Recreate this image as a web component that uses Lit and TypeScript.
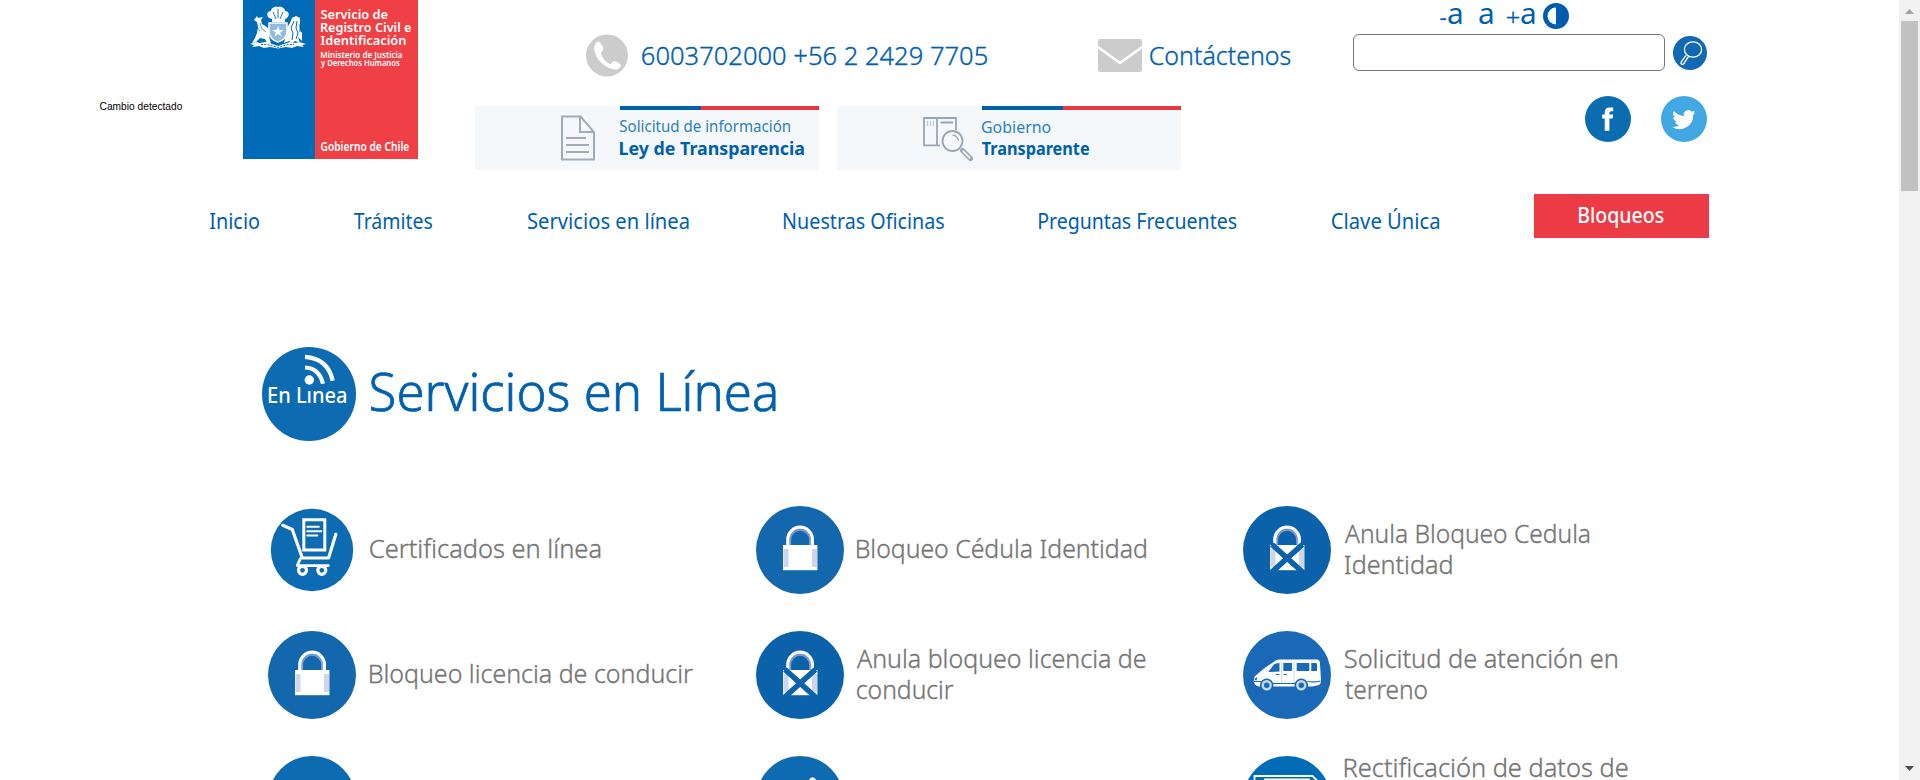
import { LitElement, html, svg, css, nothing } from "lit";
import { customElement, property } from "lit/decorators.js";

const FONT = '"Noto Sans", "Open Sans", sans-serif';
const pen = document.createElement("canvas").getContext("2d")!;

/* One line of text whose ink spans exactly `width` pixels, centred on its capital height. */
@customElement("fit-text")
class FitText extends LitElement {
  @property() text = "";
  @property() family = FONT;
  @property({ type: Number }) width = 100;
  @property({ type: Number }) size = 16;
  @property({ type: Number }) line = 20;
  @property({ type: Number }) weight = 400;

  static styles = css`
    :host { display: block; flex: none; }
    svg { display: block; overflow: visible; }
    text { fill: currentColor; stroke: currentColor; }
  `;

  render() {
    /* Measured at ten times the size, since the ink box is rounded to whole pixels. */
    pen.font = `${this.weight} ${this.size * 10}px ${this.family}`;
    const m = pen.measureText(this.text);
    const left = m.actualBoundingBoxLeft / 10;
    const ink = left + m.actualBoundingBoxRight / 10;
    const scale = this.width / ink;
    const base = this.line / 2 + this.size * 0.357;
    /* The light cut is thickened a little, to a weight between light and regular. */
    const stroke = this.weight === 300 ? this.size * 0.014 : 0;
    return html`<svg width=${this.width} height=${this.line}>
      <text
        transform="translate(${left * scale} ${base}) scale(${scale} 1)" stroke-width=${stroke}
        font-family=${this.family} font-size=${this.size} font-weight=${this.weight}
      >${this.text}</text>
    </svg>`;
  }
}

const fit = (text: string, width: number, size: number, line: number, weight = 400, family = FONT) =>
  html`<fit-text .text=${text} .width=${width} .size=${size} .line=${line} .weight=${weight} .family=${family}></fit-text>`;

const lockBody = svg`
  <path d="M34.200 39V34a9.900 10.200 0 0 1 19.800 0V39" fill="none" stroke="#7f9bd0" stroke-width="1.800"/>
  <path d="M31.800 40V33.500a12.300 12.300 0 0 1 24.600 0V40" fill="none" stroke="#fff" stroke-width="3.200"/>
  <rect x="27" y="39" width="34.400" height="25.200" fill="#fff"/>
  <path d="M27.500 43h5v18h-5zM56 43h5v18h-5z" fill="#ced6ee"/>`;

const art: Record<string, [string, unknown]> = {
  lock: ["#1367ad", lockBody],
  unlock: ["#0b62ab", svg`${lockBody}
    <path d="M29 38.500L60 66.500M59.400 38.500L28.400 66.500" stroke="#0b62ab" stroke-width="5.600"/>`],
  cart: ["#0d6bb1", svg`<g transform="translate(2.8 2.3)" fill="none" stroke="#fff" stroke-width="3.2" stroke-linecap="round" stroke-linejoin="round">
    <path d="M12 17l9.500 4.200 10 28.500h26.300L65 26"/>
    <path d="M29.500 50.500L26.500 57M26.500 57.300h31" stroke-width="2.800"/>
    <circle cx="31.700" cy="62" r="4"/><circle cx="51" cy="62" r="4"/>
    <path d="M33 11.500h21v30.300H33z" stroke-linejoin="miter" stroke-width="3"/>
    <path d="M36.500 18.400h11.500M36.500 22.900h14M36.500 27.200h10" stroke-width="2"/></g>`],
  van: ["#1a69b6", svg`
    <path d="M10.700 49.500l1-4q2-2 10-8.500l11-7.500q2-1 4-1h37q3 .3 3.200 3l1.200 18.500q-.3 4-4 4.500l-5 1H16q-5-1-5.300-6z" fill="#fff"/>
    <path d="M25.300 41l5.500-7.500q1.500-1.500 5.700-1.500v8.500zM40.300 32H49v8h-8.700zM53.700 32h12.600v8H53.700zM68.300 32h4.500q1.200 0 1.200 1.500V40h-5.700z" fill="#1a69b6"/>
    <path d="M38.700 31v22M51 31v22" stroke="#c5d9ee" stroke-width="1"/>
    <path d="M33 43.500h3.500M40.500 43.500H44" stroke="#1a69b6" stroke-width="1.200"/>
    <path d="M11 50.500h7M29.500 52.500h23M64.500 50.500q8 1 13-.5" stroke="#1a69b6" stroke-width="1.100" fill="none"/>
    <path d="M11.500 49l1.300-2.500 1.500 0-.8 3z" fill="#1a69b6"/>
    <g fill="#c3d8ee" stroke="#1a69b6"><circle cx="23.700" cy="54.300" r="6" stroke-width="1.600"/><circle cx="58.300" cy="54.300" r="6" stroke-width="1.600"/></g>
    <g fill="#1a69b6"><circle cx="23.700" cy="54.300" r="2.700"/><circle cx="58.300" cy="54.300" r="2.700"/></g>`],
  plain: ["#0d6bb1", svg`<path d="M25 24.200h40" stroke="#2a6fb9" stroke-width=".6"/>`],
  pencil: ["#0d6bb1", svg`<path d="M53 25q.5-3.500 3.500-3.800 3 .3 4 3.800z" fill="#fff"/>`],
  card: ["#006cb5", svg`<path d="M11.500 30V20h58l6 6M22 23.500h44V30H22z" fill="none" stroke="#fff" stroke-width="1.800"/>`],
};

interface Service { icon: string; r?: number; rows?: number; lines: [string, number][]; }
const services: Service[] = [
  { icon: "cart", r: 41.2, lines: [["Certificados en línea", 230.5]] },
  { icon: "lock", lines: [["Bloqueo Cédula Identidad", 289]] },
  { icon: "unlock", lines: [["Anula Bloqueo Cedula", 244.5], ["Identidad", 106.5]] },
  { icon: "lock", lines: [["Bloqueo licencia de conducir", 323]] },
  { icon: "unlock", lines: [["Anula bloqueo licencia de", 288.5], ["conducir", 96.5]] },
  { icon: "van", lines: [["Solicitud de atención en", 272], ["terreno", 82]] },
  { icon: "plain", lines: [] },
  { icon: "pencil", lines: [] },
  { icon: "card", rows: 3, lines: [["Rectificación de datos de", 282.5]] },
];

const nav: [string, number][] = [
  ["Inicio", 49], ["Trámites", 78], ["Servicios en línea", 160.5],
  ["Nuestras Oficinas", 160], ["Preguntas Frecuentes", 197.5], ["Clave Única", 107],
];

@customElement("app-root")
class AppRoot extends LitElement {
  static styles = css`
    :host { display: block; font-family: "Noto Sans", sans-serif; color: #0060ae; }
    svg { display: block; flex: none; }
    .window { display: flex; height: 780px; overflow: hidden; background: #fff; }
    .page { width: 1899px; flex: none; }
    .bar { width: 21px; background: #f1f1f1; display: flex; flex-direction: column; }
    .thumb { height: 170px; width: 17px; margin-left: 2px; background: #c1c1c1; }
    .gap { flex: 1; }
    .header { display: flex; align-items: flex-start; height: 194px; }
    .note { width: 143px; padding: 96px 0 0 100px; color: #000; }
    .logo { display: flex; width: 175px; height: 159px; color: #fff; }
    .logo-blue { width: 72px; background: #006cb7; padding: 6px 0 0 6px; box-sizing: border-box; }
    .logo-red { flex: 1; background: #ef4045; display: flex; flex-direction: column; padding: 8px 0 2px 6.3px; }
    .ministry { margin-top: 4px; }
    .middle { width: 706px; margin-left: 57px; }
    .contact { display: flex; align-items: center; height: 106px; padding: 5px 0 0 111px; box-sizing: border-box; }
    .phone-text { margin: 0 111.3px 0 13.7px; }
    .mail-text { margin-left: 8.3px; }
    .banners { display: flex; gap: 18px; }
    .banner { width: 344px; height: 64px; background: #f4f8fa; display: flex; }
    .banner-icon { width: 145px; padding: 8px 0 0 85px; box-sizing: border-box; }
    .banner-main { flex: 1; }
    .stripe { height: 4px; background: linear-gradient(90deg, #005fae 81px, #e7373f 81px); }
    .banner-main fit-text:nth-child(2) { color: #2d7fc0; margin-top: 6px; }
    .right { width: 356px; margin-left: 172px; }
    .sizes { display: flex; align-items: center; height: 32px; padding-left: 87px; }
    .s1 { margin: 2px 1.5px 0 0; }
    .s2 { margin: 0 17.5px 4px 0; }
    .s3 { margin: 0 14.5px 4px 0; }
    .s4 { margin: 2px 2px 0 0; }
    .s5 { margin: 0 8.5px 4px 0; }
    .search { display: flex; align-items: center; gap: 8px; margin-top: 2px; }
    .field { width: 312px; height: 37px; box-sizing: border-box; border: 1px solid #767676; border-radius: 6px; background: #fff; outline: 0; padding: 0 8px; font: inherit; }
    .social { display: flex; justify-content: flex-end; gap: 30px; padding: 24.5px 2px 0 0; }
    .nav { display: flex; align-items: flex-start; gap: 95.3px; padding-left: 210.2px; height: 54px; }
    .block { width: 175px; height: 44px; background: #ec3b45; color: #fff; display: flex; justify-content: center; }
    .title { display: flex; align-items: center; padding: 99px 0 0 262px; gap: 15px; height: 94px; }
    .title fit-text { margin-bottom: 4px; }
    .grid { display: grid; grid-template-columns: repeat(3, 487.5px); grid-auto-rows: 125px; padding: 46.5px 0 0 268px; }
    .cell { display: flex; align-items: center; gap: 13.8px; }
    .label { color: #757575; margin-bottom: 3px; }
    .label.tall { height: 93px; }
  `;

  crest() {
    return html`<svg width="58" height="43" viewBox="0 0 58 43" fill="#fff">
      <path d="M20 12c-3-3-2-7 2-7 0-3 4-5 7-4 3-1 7 1 7 4 4 0 5 4 2 7l-2 1 0 3H23l0-3z"/>
      <path d="M24 6l3 7M29 3v9M34 6l-3 7" stroke="#006cb7" stroke-width=".9"/>
      <path d="M5 14l3-4 1 2 5-1-2 3 1 4 5 3 3 5-1 4 2 8-3 1-3-6-5-1-4 4-4 1 3-5 2-5 1-6-1-5z"/>
      <path d="M11 17l2 6 4 3M7 20l4 5" stroke="#006cb7" stroke-width=".7" fill="none"/>
      <path d="M51 12l-4-2-4 2-2 5-4 6 0 5-2 9 5-2 3 2 3-2 5 2-2-6 4 4 0-8-2-3 0-8z"/>
      <path d="M45 15l-3 7 2 5 -1 7M48 15l-1 7 2 5-2 6M51 18l0 8" stroke="#006cb7" stroke-width="1" fill="none"/>
      <path d="M20 17h18v9q-1 8-9 10-8-2-9-10z" fill="#8ebde0" stroke="#fff" stroke-width="1.5"/>
      <path d="M29 20l1.500 4h4l-3.300 2.500 1.300 4-3.500-2.400-3.500 2.400 1.300-4-3.300-2.500h4z"/>
      <path d="M1 38l6-2 4 1 6-1 12 4 12-4 6 1 3-1 7 2-4 1 2 2-7-1-5 2-6-1-8 1.500-8-1.500-6 1-5-2-7 1 2-2z"/>
      <path d="M12 38.500l6 0 11 3 10-3 6 0" stroke="#006cb7" stroke-width="1" stroke-dasharray="2 1.300" fill="none"/>
    </svg>`;
  }

  banner(icon: unknown, top: unknown, bottom: unknown) {
    return html`<div class="banner">
      <div class="banner-icon">${icon}</div>
      <div class="banner-main"><div class="stripe"></div>${top}${bottom}</div>
    </div>`;
  }

  render() {
    return html`<div class="window">
      <div class="page">
        <div class="header">
          <div class="note">${fit("Cambio detectado", 82, 11, 20, 400, '"Liberation Sans", sans-serif')}</div>
          <div class="logo">
            <div class="logo-blue">${this.crest()}</div>
            <div class="logo-red">
              ${fit("Servicio de", 66.5, 12.6, 13, 600)}
              ${fit("Registro Civil e", 90, 12.6, 13, 600)}
              ${fit("Identificación", 84.5, 12.6, 13, 600)}
              <div class="ministry">
                ${fit("Ministerio de Justicia", 81, 8.4, 8.3, 600)}
                ${fit("y Derechos Humanos", 78.5, 8.4, 8.3, 600)}
              </div>
              <div class="gap"></div>
              ${fit("Gobierno de Chile", 88, 11.8, 20, 600)}
            </div>
          </div>
          <div class="middle">
            <div class="contact">
              <svg width="42" height="43" viewBox="0 0 42 43">
                <circle cx="21" cy="21.500" r="21" fill="#ccc"/>
                <path d="M12.500 7.300q-5 2.700-4.300 8.200 1.300 8 7.300 13.500 6 5.600 13.500 6.500 4.300.3 6-4.300-3-3.700-7.500-4.200l-3.300 3.200q-7.500-3.700-9.300-11l2.300-3.200q.3-4.500-4.700-8.700z" fill="#fff"/>
              </svg>
              <div class="phone-text">${fit("6003702000 +56 2 2429 7705", 345, 26.4, 31, 300)}</div>
              <svg width="44" height="33" viewBox="0 0 44 33">
                <rect width="44" height="33" rx="2" fill="#ccc"/>
                <path d="M-1 7.500L22 24 45 7.500" fill="none" stroke="#fff" stroke-width="2.600"/>
              </svg>
              <div class="mail-text">${fit("Contáctenos", 140.5, 26.4, 31, 300)}</div>
            </div>
            <div class="banners">
              ${this.banner(
                html`<svg width="36" height="48" viewBox="0 0 36 48" fill="none" stroke="#a0adb8" stroke-width="2">
                  <path d="M2 2.500h18.500L34 18v27.500H2zM20 3v15h14M6 24h20M6 31h23M6 38h23"/></svg>`,
                fit("Solicitud de información", 170, 16.2, 20),
                fit("Ley de Transparencia", 184, 18, 25, 700))}
              ${this.banner(
                html`<svg width="52" height="48" viewBox="0 0 52 48" fill="none" stroke="#9aa7b3" stroke-width="1.800">
                  <path d="M18 31.300H2V4h32v12M15 4v27M18.500 8.500H31"/>
                  <path d="M5.500 7v5M8.500 7v5M11.500 7v5" stroke="#c3ccd3" stroke-width="1.300"/>
                  <circle cx="30.500" cy="27" r="10"/><path d="M30.500 21.200q5 .3 6 5.500" stroke-width="1.300"/>
                  <path d="M40.500 36.500l8 8" stroke-width="5" stroke-linecap="round"/><path d="M40.800 36.800l7.500 7.500" stroke="#f4f8fa" stroke-width="1.800"/></svg>`,
                fit("Gobierno", 68.5, 16.4, 22.5),
                fit("Transparente", 107, 17.5, 19.5, 700))}
            </div>
          </div>
          <div class="right">
            <div class="sizes">
              <div class="s1">${fit("-", 6, 22, 30)}</div>
              <div class="s2">${fit("a", 13.5, 29, 28)}</div>
              <div class="s3">${fit("a", 13.5, 29, 28)}</div>
              <div class="s4">${fit("+", 12, 24, 28, 300)}</div>
              <div class="s5">${fit("a", 13.5, 29, 28)}</div>
              <svg width="26" height="26" viewBox="0 0 26 26"><circle cx="13" cy="13" r="13" fill="#005cb0"/><path d="M13 4.500v17a8.500 8.500 0 0 1 0-17z" fill="#fff"/></svg>
            </div>
            <div class="search">
              <input class="field" type="text">
              <svg width="34" height="34" viewBox="0 0 34 34"><circle cx="17" cy="17" r="17" fill="#1168b3"/>
                <g fill="none" stroke="#fff" stroke-width="1.300"><ellipse cx="20" cy="13.500" rx="8.600" ry="7.700"/><path d="M13 19.300l-5 7q-.5 1.500.8 2t2-.6l4.800-7.400"/></g></svg>
            </div>
            <div class="social">
              <svg width="46" height="46" viewBox="0 0 46 46"><circle cx="23" cy="23" r="23" fill="#0b6cb0"/>
                <path d="M19.700 34.700V22.500h-2.500v-4h2.500v-2.300q0-4.800 5-4.800h3.500v3.800h-2.200q-1.600 0-1.600 1.500v1.800h3.700l-.4 4h-3.300v12.200z" fill="#fff"/></svg>
              <svg width="46" height="46" viewBox="0 0 46 46"><circle cx="23" cy="23" r="23" fill="#42a8e3"/>
                <path transform="translate(11.300 12) scale(.97)" fill="#fff" d="M24 4.600a10 10 0 0 1-2.800.8 5 5 0 0 0 2.100-2.700 10 10 0 0 1-3.100 1.200 4.900 4.900 0 0 0-8.400 4.500A14 14 0 0 1 1.700 3.200a4.900 4.900 0 0 0 1.500 6.500 5 5 0 0 1-2.200-.6 4.900 4.900 0 0 0 4 4.900 5 5 0 0 1-2.300.1 4.900 4.900 0 0 0 4.600 3.400A10 10 0 0 1 0 19.500 14 14 0 0 0 21.500 7.100 10 10 0 0 0 24 4.600z"/></svg>
            </div>
          </div>
        </div>
        <div class="nav">
          ${nav.map(([t, w]) => fit(t, w, 22, 54))}
          <div class="block">${fit("Bloqueos", 84.5, 21.8, 42, 500)}</div>
        </div>
        <div class="title">
          <svg width="94" height="94" viewBox="0 0 94 94">
            <circle cx="47" cy="47" r="47" fill="#0d6bb1"/>
            <circle cx="47.300" cy="33" r="4.700" fill="#fff"/>
            <path d="M43 20.500q14 .5 18 16.300M43 9.800q23 1.500 27.700 24" fill="none" stroke="#fff" stroke-width="4.200"/>
            <text x="5" y="56" fill="#fff" font-family="Noto Sans, sans-serif" font-size="20.800" font-weight="500" textLength="80.500" lengthAdjust="spacingAndGlyphs">En Lınea</text>
          </svg>
          ${fit("Servicios en Línea", 405, 53, 70, 300)}
        </div>
        <div class="grid">
          ${services.map((s) => html`<div class="cell">
            <svg width="88" height="88" viewBox="0 0 88 88">
              <circle cx="44" cy="44" r=${s.r ?? 44} fill=${art[s.icon][0]}/>${art[s.icon][1]}
            </svg>
            ${s.lines.length
              ? html`<div class="label ${s.rows ? "tall" : ""}">${s.lines.map(([t, w]) => fit(t, w, 26.4, 31, 300))}</div>`
              : nothing}
          </div>`)}
        </div>
      </div>
      <div class="bar">
        <svg width="21" height="21" viewBox="0 0 21 21"><path d="M6 14l4.500-5 4.500 5z" fill="#a3a3a3"/></svg>
        <div class="thumb"></div>
        <div class="gap"></div>
        <svg width="21" height="21" viewBox="0 0 21 21"><path d="M6 7l4.500 5 4.500-5z" fill="#505050"/></svg>
      </div>
    </div>`;
  }
}
